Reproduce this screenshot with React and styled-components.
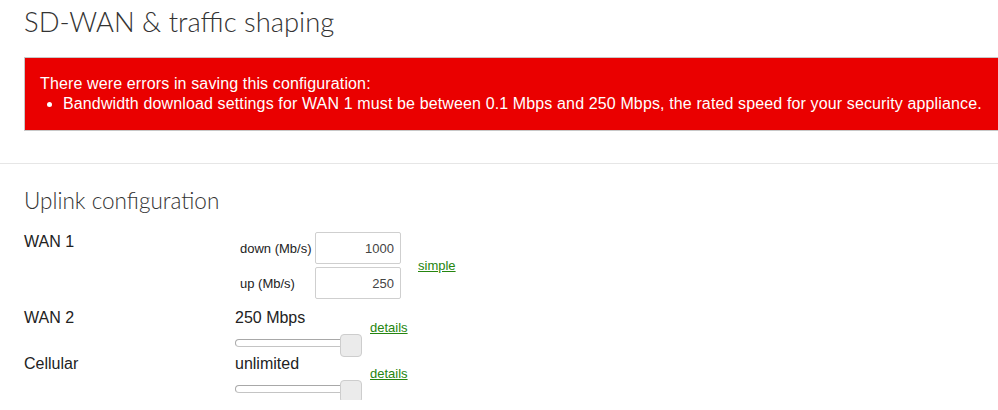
import React from 'react'
import styled, { createGlobalStyle } from 'styled-components';

const GlobalStyle = createGlobalStyle`
    body{
        margin: 0;
        background: #fff;
        font-family: "Liberation Sans", Arial, sans-serif;
        color: #222;
        overflow: hidden;
    }
`;

const Header = styled.div`
    padding: 6px 0 0 24px;
`;

const Title = styled.h1`
    margin: 0;
    font-family: Lato, "Open Sans", sans-serif;
    font-weight: 300;
    font-size: 27.4px;
    line-height: 32px;
    color: #333;
`;

const ErrorBox = styled.div`
    margin: 19px -60px 0 0;
    padding: 16px 15px;
    background: #ea0000;
    border: 1px solid #c8c8c8;
    color: #fff;
    font-size: 16px;
    line-height: 20px;
    letter-spacing: 0.13px;
    white-space: nowrap;
`;

const ErrorList = styled.ul`
    margin: 0;
    padding-left: 23px;
`;

const Divider = styled.hr`
    margin: 32px 0 0;
    border: 0;
    border-top: 1px solid #e6e6e6;
`;

const Section = styled.div`
    padding: 21px 0 0 24px;
`;

const SectionTitle = styled.h2`
    margin: 0 0 15px;
    font-family: Lato, "Open Sans", sans-serif;
    font-weight: 300;
    font-size: 22.5px;
    line-height: 32px;
    color: #333;
`;

const Row = styled.div`
    display: grid;
    grid-template-columns: 211px auto;
    margin-bottom: ${p => p.$gap || 0}px;
`;

const RowLabel = styled.div`
    font-size: 16px;
    line-height: 20px;
`;

const Controls = styled.div`
    display: flex;
    align-items: ${p => p.$center ? 'center' : 'flex-start'};
`;

const InputGrid = styled.div`
    display: grid;
    grid-template-columns: 80px 86px;
    row-gap: 3px;
    align-items: center;
`;

const FieldLabel = styled.label`
    font-size: 13px;
    padding-left: 5px;
`;

const NumberInput = styled.input`
    box-sizing: border-box;
    width: 86px;
    height: 32px;
    border: 1px solid #cfcfcf;
    border-radius: 2px;
    padding: 0 6px;
    text-align: right;
    font-family: "Liberation Sans", Arial, sans-serif;
    font-size: 13px;
    color: #444;
    outline: none;
`;

const Link = styled.a`
    font-size: 13px;
    line-height: 16px;
    color: #25850f;
    text-decoration: underline;
    margin-left: ${p => p.$left}px;
    margin-top: ${p => p.$top || 0}px;
    cursor: pointer;
`;

const SliderBlock = styled.div`
    width: 127px;
`;

const SliderValue = styled.div`
    font-size: 16px;
    line-height: 20px;
`;

const Slider = styled.div`
    position: relative;
    margin-top: 6px;
    height: 20px;
`;

const Track = styled.div`
    position: absolute;
    left: 0;
    top: 5px;
    width: 117px;
    height: 8px;
    box-sizing: border-box;
    border: 1px solid #a8a8a8;
    border-bottom-color: #c4c4c4;
    border-radius: 5px;
    background: #fff;
`;

const Thumb = styled.div`
    position: absolute;
    right: 0;
    top: 0;
    width: 22px;
    height: 23px;
    box-sizing: border-box;
    border: 1px solid #cdcdcd;
    border-radius: 4px;
    background: #ebebeb;
`;

const SliderRow = ({ label, value }) => (
    <Row>
        <RowLabel>{label}</RowLabel>
        <Controls>
            <SliderBlock>
                <SliderValue>{value}</SliderValue>
                <Slider>
                    <Track />
                    <Thumb />
                </Slider>
            </SliderBlock>
            <Link $left={8} $top={12}>details</Link>
        </Controls>
    </Row>
);

export default function App() {
    return (
        <>
            <GlobalStyle />
            <Header>
                <Title>SD-WAN &amp; traffic shaping</Title>
                <ErrorBox>
                    There were errors in saving this configuration:
                    <ErrorList>
                        <li>Bandwidth download settings for WAN 1 must be between 0.1 Mbps and 250 Mbps, the rated speed for your security appliance.</li>
                    </ErrorList>
                </ErrorBox>
            </Header>
            <Divider />
            <Section>
                <SectionTitle>Uplink configuration</SectionTitle>
                <Row $gap={9}>
                    <RowLabel>WAN 1</RowLabel>
                    <Controls $center>
                        <InputGrid>
                            <FieldLabel>down (Mb/s)</FieldLabel>
                            <NumberInput defaultValue="1000" />
                            <FieldLabel>up (Mb/s)</FieldLabel>
                            <NumberInput defaultValue="250" />
                        </InputGrid>
                        <Link $left={17}>simple</Link>
                    </Controls>
                </Row>
                <SliderRow label="WAN 2" value="250 Mbps" />
                <SliderRow label="Cellular" value="unlimited" />
            </Section>
        </>
    )
}
